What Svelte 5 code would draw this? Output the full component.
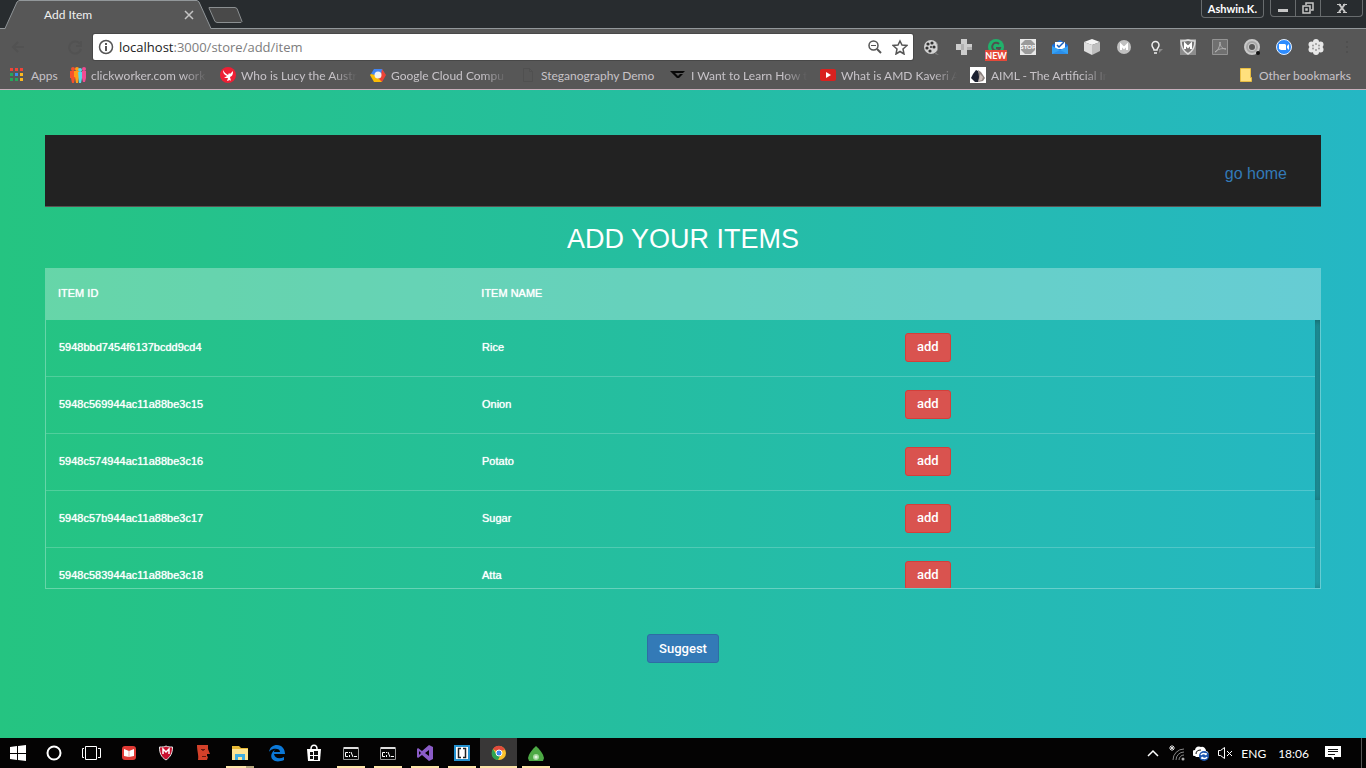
<script>
  const bookmarks = [
    { id: 'click', label: 'clickworker.com work' },
    { id: 'lucy', label: 'Who is Lucy the Austr' },
    { id: 'cloud', label: 'Google Cloud Compu' },
    { id: 'page', label: 'Steganography Demo', full: true },
    { id: 'learn', label: 'I Want to Learn How t' },
    { id: 'youtube', label: 'What is AMD Kaveri A' },
    { id: 'aiml', label: 'AIML - The Artificial In' }
  ];
  const extensions = ['reel', 'plus', 'gram', 'stop', 'inbox', 'cube', 'mega', 'bulb', 'shield', 'pdf', 'ring', 'zoom', 'flower', 'menu'];
  const items = [
    { id: '5948bbd7454f6137bcdd9cd4', name: 'Rice' },
    { id: '5948c569944ac11a88be3c15', name: 'Onion' },
    { id: '5948c574944ac11a88be3c16', name: 'Potato' },
    { id: '5948c57b944ac11a88be3c17', name: 'Sugar' },
    { id: '5948c583944ac11a88be3c18', name: 'Atta' }
  ];
  const apps = [
    { id: 'start' }, { id: 'cortana' }, { id: 'tasks' }, { id: 'reader' }, { id: 'mcafee' }, { id: 'face' },
    { id: 'files', run: 'double' }, { id: 'edge' }, { id: 'store' }, { id: 'cmd', run: 'on' }, { id: 'cmd', run: 'on' },
    { id: 'vs', run: 'on' }, { id: 'brackets', run: 'on' }, { id: 'chrome', active: true }, { id: 'mongo', run: 'on' }
  ];
</script>

{#snippet icon(id)}
  <svg class="icon" viewBox="0 0 16 16" width="16" height="16" aria-hidden="true">
    {#if id === 'apps'}
      <path fill="#f04438" d="M1 1h3v3H1zM6 1h3v3H6zM11 1h3v3h-3z" />
      <path fill="#26a65b" d="M1 6h3v3H1zM1 11h3v3H1zM6 11h3v3H6z" /><path fill="#3b8df0" d="M6 6h3v3H6z" />
      <path fill="#fbb921" d="M11 6h3v3h-3zM11 11h3v3h-3z" />
    {:else if id === 'click'}
      <circle cx="3" cy="2" r="2" fill="#f4512c" /><circle cx="7" cy="2" r="2" fill="#ff9e16" /><circle cx="10" cy="3" r="2" fill="#58d5e6" /><circle cx="14" cy="2" r="2" fill="#f04b93" />
      <path fill="#f4512c" d="M0 4h5v7l-1 5H2l-1-5H0z" /><path fill="#ff9e16" d="M4 4h5v6l-1 6H6l-1-6H4z" /><path fill="#58d5e6" d="M8 5h4v6l-1 5H9z" /><path fill="#f04b93" d="M12 4h4v7l-1 4h-2l-1-4z" />
    {:else if id === 'lucy'}
      <circle cx="8" cy="8" r="8" fill="#ee1f35" /><path fill="#fff" d="M3 3c0 3 1 5 4 6l-3 2h4l-1 3 3-1 1 1-1-4c3-1 3-4 3-6l-3 3-1-1-1 2C6 7 4 5 3 3z" />
    {:else if id === 'cloud'}
      <path fill="#4285f4" d="M4 2h8l3 5H9L5 9 1 7z" /><path fill="#ea4335" d="M12 2l4 6-4 7-4-2 3-5z" /><path fill="#fbbc05" d="M1 7l4 1 4 4 3 3H4L0 8z" /><circle cx="8" cy="8" r="3.500" fill="#f3f3f3" />
    {:else if id === 'page'}
      <path fill="none" stroke="#505050" d="M3.500 1.500h6l3 3v10h-9zM9.500 1.500v3h3" />
    {:else if id === 'learn'}
      <path fill="#080808" d="M0 4h15l-2 2H5l3 3 2-2h3l-4 4H7z" />
    {:else if id === 'youtube'}
      <rect y="2" width="16" height="12" rx="2" fill="#d9211f" /><path fill="#fff" d="M6 5l5 3-5 3z" />
    {:else if id === 'aiml'}
      <path fill="#fff" d="M0 0h16v16H0z" /><path fill="#1c2130" d="M6 3l2 1 2 5-2 6H5l-4-4 2-4z" /><path fill="#8c8380" d="M8 3l3 2 4 6-2 3-5 1 1-5z" /><path fill="#c9bdb8" d="M10 7l3 3-1 3-3 1z" />
    {:else if id === 'folder'}
      <path fill="#ffe07d" stroke="#e8bd42" d="M2.500 1.500h10v9h1v4h-11z" />
    {:else if id === 'reel'}
      <circle cx="7" cy="8" r="7" fill="#d2d2d2" /><path fill="#8a8a8a" d="M11 2c4 2 4 8 1 12l3 2-4-1c3-3 3-9 0-13z" />
      <g fill="#333"><circle cx="4" cy="5" r="1.600" /><circle cx="8" cy="4" r="1.600" /><circle cx="3" cy="9" r="1.600" /><circle cx="10" cy="8" r="1.600" /><circle cx="6" cy="12" r="1.600" /><circle cx="7" cy="8" r="1" /></g>
    {:else if id === 'plus'}
      <path fill="#ccc" d="M5 0h6v5h5v6h-5v5H5v-5H0V5h5z" /><path fill="#b0b0b0" d="M5 5h3v6H5zM11 8h5v3h-5z" />
    {:else if id === 'gram'}
      <circle cx="8" cy="8" r="8" fill="#20b26b" /><path fill="none" stroke="#505050" stroke-width="2" d="M11 5a4 4 0 1 0 1 4H8" />
    {:else if id === 'stop'}
      <path fill="#e8e8e8" d="M0 0h16v16H0z" /><path fill="#9a9a9a" d="M5 1h6l4 4v6l-4 4H5l-4-4V5z" /><text x="8" y="10" font-size="6" font-weight="700" text-anchor="middle" fill="#fff">STOP</text>
    {:else if id === 'inbox'}
      <path fill="#1b6fdc" d="M0 6l8-5 8 5v9H0z" /><path fill="#fff" d="M3 3h10v7H3z" /><path fill="#36a2f5" d="M0 7l8 4 8-4v8H0z" /><path fill="#2b8eea" d="M0 15l8-4 8 4z" /><path fill="none" stroke="#1a5fbc" stroke-width="1.500" d="M5 6l2 2 5-5" />
    {:else if id === 'cube'}
      <path fill="#f4f4f4" d="M8 0l8 3-8 3-8-3z" /><path fill="#ddd" d="M0 3l8 3v10l-8-4z" /><path fill="#bebebe" d="M16 3L8 6v10l8-4z" />
    {:else if id === 'mega'}
      <circle cx="8" cy="8" r="7" fill="#c0c0c0" /><path fill="none" stroke="#fff" stroke-width="2" d="M5 11V6l3 3 3-3v5" />
    {:else if id === 'bulb'}
      <path fill="none" stroke="#eee" stroke-width="1.500" d="M6 11c0-2-2-2-2-5a3.500 3.500 0 0 1 7 0c0 3-2 3-2 5zM6 14h3" /><path fill="#888" d="M11 10h4l-4 4z" />
    {:else if id === 'shield'}
      <path fill="#8c8c8c" d="M0 0h16v16H0z" /><path fill="#777" stroke="#ddd" stroke-width="1.500" d="M1 2c3 0 5 0 7-1 2 1 4 1 7 1 0 6-2 10-7 13C3 12 1 8 1 2z" /><path fill="none" stroke="#fff" stroke-width="2" d="M5 10V5l3 3 3-3v5" />
    {:else if id === 'pdf'}
      <path fill="#707070" stroke="#949494" d="M.5.5h15v15H.5z" /><path fill="none" stroke="#b0b0b0" d="M3 13c3-1 5-6 5-10 0 5 3 7 6 7-4-1-8 0-11 3z" />
    {:else if id === 'ring'}
      <circle cx="8" cy="8" r="5.500" fill="none" stroke="#c9c9c9" stroke-width="5" /><circle cx="8" cy="8" r="5" fill="none" stroke="#a6a6a6" stroke-width="2" /><circle cx="14" cy="14" r="2" fill="#111" />
    {:else if id === 'zoom'}
      <circle cx="8" cy="8" r="7.500" fill="#2d8cff" stroke="#e6f1ff" /><path fill="#fff" d="M3 5h6l1 1v5H5l-2-1zM11 7l2-2v6l-2-2z" />
    {:else if id === 'flower'}
      <g fill="#e8e8e8"><circle cx="8" cy="8" r="4" /><circle cx="8" cy="3" r="3" /><circle cx="12.500" cy="5.500" r="3" /><circle cx="12.500" cy="10.500" r="3" /><circle cx="8" cy="13" r="3" /><circle cx="3.500" cy="10.500" r="3" /><circle cx="3.500" cy="5.500" r="3" /></g><g fill="#999"><circle cx="8" cy="5" r="1" /><circle cx="8" cy="11" r="1" /><circle cx="5" cy="6.500" r="1" /><circle cx="11" cy="6.500" r="1" /><circle cx="5" cy="9.500" r="1" /><circle cx="11" cy="9.500" r="1" /></g>
    {:else if id === 'menu'}
      <path fill="#4f4f4f" d="M7 2h2v2H7zM7 7h2v2H7zM7 12h2v2H7z" />
    {/if}
  </svg>
{/snippet}

{#snippet appIcon(id)}
  <svg class="icon" viewBox="0 0 20 20" width="20" height="20" aria-hidden="true">
    {#if id === 'start'}
      <path fill="#fff" d="M2 4l7-1v7H2zM10 3l8-1v8h-8zM2 11h7v6l-7-1zM10 11h8v7l-8-1z" />
    {:else if id === 'cortana'}
      <circle cx="9" cy="10" r="6.500" fill="none" stroke="#fff" stroke-width="2" />
    {:else if id === 'tasks'}
      <path fill="none" stroke="#fff" d="M3.500 3.500h11v13h-11zM2 5.500H.5v9H2M16 5.500h2.500v9H16" />
    {:else if id === 'reader'}
      <rect x="3" y="3" width="14" height="14" rx="3" fill="#e03a35" /><path fill="#fff" d="M5 6l5 2 5-2v7l-5 1-5-1z" /><path stroke="#f1a3a0" d="M10 8v6" />
    {:else if id === 'mcafee'}
      <path fill="#c8102e" stroke="#e8e8e8" d="M3.500 4c3 0 5 0 6.500-1 2 1 4 1 6.500 1 0 6-2 10-6.500 13C5 14 3.500 10 3.500 4z" /><path fill="none" stroke="#fff" stroke-width="1.500" d="M7 11V6l3 3 3-3v5" />
    {:else if id === 'face'}
      <path fill="#d4412a" d="M4 2h11v4l2 5h-3v2l1 1-1 3H5c1-5-1-8-1-15z" /><path stroke="#631910" d="M8 6.500h4M9 13.500h4" /><circle cx="10" cy="7" r="1" fill="#631910" />
    {:else if id === 'files'}
      <path fill="#e8b935" d="M2 3h7l2 2h7v4H2z" /><path fill="#ffe493" d="M2 6h16v11H2z" /><path fill="#41ade0" d="M5 11h10v6h-3v-3H8v3H5z" />
    {:else if id === 'edge'}
      <path fill="#0b78d7" d="M2 9c1-5 4-7 8-7 5 0 8 4 8 9H7c1 5 6 5 10 3v3C8 21 2 16 5 10c1-2 3-4 5-4-5-1-7 2-8 3zm5 0h6c0-4-6-4-6 0z" />
    {:else if id === 'store'}
      <path fill="#fff" d="M3 6h14l-1 12H4z" /><path fill="none" stroke="#fff" stroke-width="1.500" d="M7 6c0-5 6-5 6 0" /><path fill="#111" d="M6 9h3v3H6zM10 8h4v4h-4zM6 13h3v3H6zM10 13h4v4h-4z" />
    {:else if id === 'cmd'}
      <path fill="#060606" stroke="#999" d="M2.500 4.500h15v12h-15z" /><path stroke="#ddd" stroke-width="2" d="M3 5h14" /><path fill="none" stroke="#fff" d="M7 9.500H4.500v4H7M8.500 9v1M8.500 12v2M10 9l2 5M13 13.500h3" />
    {:else if id === 'vs'}
      <path fill="#8b5cc7" fill-rule="evenodd" d="M14 2l4 2v12l-4 2-7-6-4 3-1-1V6l1-1 4 3zM4 8v4l2-2zm10-1l-4 3 4 3z" />
    {:else if id === 'brackets'}
      <rect x="2" y="2" width="16" height="16" fill="#2492d0" /><path fill="#fff" d="M4 4h12v12H4z" /><path fill="none" stroke="#222" stroke-width="1.500" d="M9 5.500H6.500v9H9M11 5.500h2.500v9H11" />
    {:else if id === 'chrome'}
      <circle cx="10" cy="10" r="7" fill="#fbc22d" /><path fill="#e14b3c" d="M10 10L4 6c3-5 10-4 12 1l-6 1z" /><path fill="#2fa253" d="M4 6l4 6 3 1-2 4C3 17 1 10 4 6z" /><circle cx="10" cy="10" r="3" fill="#4285f4" stroke="#fff" />
    {:else if id === 'mongo'}
      <path fill="#4da945" d="M10 3c4 4 7 7 8 12l-1 3H3l-1-3c1-5 4-8 8-12z" /><circle cx="10" cy="14" r="3" fill="#a6d9a0" /><circle cx="10" cy="14" r="1.500" fill="#e4f5e2" />
    {/if}
  </svg>
{/snippet}

<div class="desktop">
  <header class="browser">
    <div class="tabstrip">
      <div class="tab">
        <svg class="tab-shape" viewBox="0 0 212 29" width="212" height="29" aria-hidden="true">
          <path fill="#575757" d="M5 29L17 2l2-1h178l2 1 12 27z" /><path fill="none" stroke="#92979a" d="M0 28.500h5L17 2l2-1.500h178l2 1.500 12 26.500h1" />
        </svg>
        <span class="tab-title">Add Item</span>
        <button class="tab-close" aria-label="Close tab"><svg viewBox="0 0 10 10" width="10" height="10"><path stroke="#c4c4c4" stroke-width="1.500" d="M1 1l8 8M9 1L1 9" /></svg></button>
      </div>
      <button class="newtab" aria-label="New tab"><svg viewBox="0 0 36 20" width="36" height="20"><path fill="#494949" stroke="#8b8f91" d="M1 2.500h26l2 1 5 13-1 1H9l-2-1L1 3z" /></svg></button>
      <div class="window-tools">
        <button class="profile">Ashwin.K.</button>
        <div class="controls">
          <button aria-label="Minimize"><svg viewBox="0 0 12 12" width="12" height="12"><path fill="#c6c6c6" d="M1 7h10v3H1z" /></svg></button>
          <button aria-label="Restore"><svg viewBox="0 0 12 12" width="12" height="12"><path fill="none" stroke="#c6c6c6" stroke-width="1.500" d="M4 3V1h7v7H9M1 4h7v7H1zM4 7h1v1H4z" /></svg></button>
          <button class="close" aria-label="Close"><svg viewBox="0 0 12 12" width="12" height="12"><path stroke="#c6c6c6" stroke-width="2" d="M3 2l6 8M9 2l-6 8" /><path stroke="#c6c6c6" d="M1 2.500h4M7 2.500h4M1 10.500h4M7 10.500h4" /></svg></button>
        </div>
      </div>
    </div>

    <div class="toolbar">
      <div class="nav">
        <button aria-label="Back"><svg viewBox="0 0 16 16" width="16" height="16"><path fill="none" stroke="#525252" stroke-width="2" d="M14 8H3M8 3L3 8l5 5" /></svg></button>
        <button aria-label="Reload"><svg viewBox="0 0 16 16" width="16" height="16"><path fill="none" stroke="#525252" stroke-width="2" d="M13 5a6 6 0 1 0 1 5M14 2v5H9" /></svg></button>
      </div>
      <div class="address">
        <svg class="icon" viewBox="0 0 16 16" width="16" height="16"><circle cx="8" cy="8" r="6.500" fill="none" stroke="#555" stroke-width="1.500" /><path fill="#555" d="M7 4h2v2H7zM7 7h2v5H7z" /></svg>
        <a class="url" href="#top">localhost<span>:3000/store/add/item</span></a>
        <button aria-label="Zoom"><svg viewBox="0 0 16 16" width="16" height="16"><circle cx="6.500" cy="6.500" r="4.500" fill="none" stroke="#555" stroke-width="1.500" /><path stroke="#555" stroke-width="2" d="M10 10l4 4" /><path stroke="#555" d="M4 6.500h5" /></svg></button>
        <button aria-label="Bookmark this page"><svg viewBox="0 0 16 16" width="16" height="16"><path fill="none" stroke="#555" stroke-width="1.500" d="M8 2l2 4 5 .5-4 3.500 1 5-4-2.500L4 15l1-5-4-3.500L6 6z" /></svg></button>
      </div>
      <div class="extensions">
        {#each extensions as ext}
          <button aria-label={ext}>{@render icon(ext)}{#if ext === 'gram'}<span class="new">NEW</span>{/if}</button>
        {/each}
      </div>
    </div>

    <nav class="bookmarks">
      <a class="apps" href="#apps">{@render icon('apps')}<span>Apps</span></a>
      {#each bookmarks as mark}
        <a class="mark" href="#{mark.id}">{@render icon(mark.id)}<span class:fade={!mark.full}>{mark.label}</span></a>
      {/each}
      <a class="other" href="#other">{@render icon('folder')}<span>Other bookmarks</span></a>
    </nav>
  </header>

  <main id="top">
    <div class="navbar"><a href="#home">go home</a></div>
    <h1>ADD YOUR ITEMS</h1>
    <div class="table-head">
      <table>
        <thead><tr><th>ITEM ID</th><th>ITEM NAME</th><th aria-label="Action"></th></tr></thead>
      </table>
    </div>
    <div class="table-body">
      <div class="scroller">
        <table>
          <tbody>
            {#each items as item}
              <tr><td>{item.id}</td><td>{item.name}</td><td><button class="btn danger">add</button></td></tr>
            {/each}
          </tbody>
        </table>
      </div>
      <div class="track"><div class="thumb"></div></div>
    </div>
    <button class="btn primary">Suggest</button>
  </main>

  <footer class="taskbar">
    <div class="apps-row">
      {#each apps as app}
        <button class="app {app.run ?? ''}" class:active={app.active} aria-label={app.id}>{@render appIcon(app.id)}</button>
      {/each}
    </div>
    <div class="tray">
      <svg viewBox="0 0 16 16" width="16" height="16"><path fill="none" stroke="#fff" stroke-width="1.500" d="M3 11l5-5 5 5" /></svg>
      <svg viewBox="0 0 16 16" width="16" height="16"><path stroke="#ddd" d="M3 0v6M0 3h6M1 1l4 4M5 1L1 5" /><path fill="none" stroke="#888" d="M4 15A11 11 0 0 1 15 4M7 15a8 8 0 0 1 8-8M10 15a5 5 0 0 1 5-5" /><circle cx="14" cy="14" r="1.500" fill="#aaa" /></svg>
      <svg viewBox="0 0 16 16" width="16" height="16"><path fill="#fff" d="M2 11a3 3 0 0 1 0-6 4 4 0 0 1 6-3 4 4 0 0 1 5 4c2 0 3 2 2 4l-3 2H3z" /><path fill="none" stroke="#111" d="M3 9c0-3 2-4 5-4" /><circle cx="11" cy="11" r="5" fill="#1d56ae" /><path fill="none" stroke="#fff" stroke-width="1.500" d="M8 10c1-2 4-2 5 0V8M14 12c-1 2-4 2-5 0v2" /></svg>
      <svg viewBox="0 0 16 16" width="16" height="16"><path fill="none" stroke="#fff" d="M1.500 5.500h2l4-3v11l-4-3h-2zM10 6l5 5M15 6l-5 5" /></svg>
      <span>ENG</span>
      <time>18:06</time>
      <svg class="note" viewBox="0 0 16 16" width="16" height="16"><path fill="#fff" d="M0 1h16v11H9v3l-3-3H0z" /><path stroke="#111" d="M3 4.500h10M3 6.500h10M3 9.500h7" /></svg>
    </div>
  </footer>
</div>

<style>
  :global(body) { margin: 0; }
  * { box-sizing: border-box; }
  button { border: 0; padding: 0; background: none; font: inherit; color: inherit; }
  a { text-decoration: none; color: inherit; }
  svg { display: block; flex: none; }
  .desktop { min-height: 100vh; display: flex; flex-direction: column; font-family: Lato, "Open Sans", sans-serif; font-size: 12px; }
  .browser { background: #575757; border-bottom: 1px solid #c8afbb; color: #c7c3c8; }

  .tabstrip { height: 29px; display: flex; background: #282c2f; box-shadow: inset 0 -1px #92979a; }
  .tab { position: relative; width: 208px; display: flex; align-items: center; padding: 0 14px 0 44px; color: #f0f0f0; }
  .tab-shape { position: absolute; left: 0; top: 0; }
  .tab-title { position: relative; flex: 1; }
  .tab-close { position: relative; }
  .newtab { align-self: center; }
  .window-tools { margin-left: auto; display: flex; align-items: flex-start; gap: 6px; }
  .profile { height: 18px; padding: 0 6px; border: 1px solid #686c6e; border-top: 0; border-radius: 0 0 4px 4px; color: #fff; font-size: 11px; font-weight: 700; }
  .controls { display: flex; height: 17px; border: 1px solid #686c6e; border-top: 0; border-radius: 0 0 4px 4px; margin-right: 3px; }
  .controls button { width: 25px; display: grid; place-items: center; border-right: 1px solid #686c6e; }
  .controls .close { width: 41px; border: 0; }

  .toolbar { display: flex; align-items: center; height: 36px; }
  .nav { width: 93px; padding: 0 10px; display: flex; justify-content: space-between; }
  .address { flex: 1; min-width: 0; height: 26px; display: flex; align-items: center; padding: 0 5px; background: #fff; border-radius: 2px; box-shadow: 0 0 0 1px #484848; }
  .url { flex: 1; margin-left: 5px; font-family: "Open Sans", sans-serif; font-size: 13px; color: #222; white-space: nowrap; overflow: hidden; }
  .url span { color: #7d7d7d; }
  .address button + button { margin-left: 9px; }
  .extensions { display: flex; padding: 0 4px 0 3px; }
  .extensions button { position: relative; width: 32px; height: 26px; display: grid; place-items: center; }
  .extensions button:last-child { width: 30px; }
  .new { position: absolute; left: 5px; top: 16px; width: 22px; background: #e5493a; color: #fff; font-size: 9px; line-height: 11px; font-weight: 700; text-align: center; }

  .bookmarks { height: 24px; display: flex; align-items: center; padding: 0 15px 4px 9px; white-space: nowrap; }
  .bookmarks a { display: flex; align-items: center; gap: 5px; }
  .bookmarks .apps { width: 61px; flex: none; gap: 6px; }
  .mark { width: 150px; padding-right: 8px; overflow: hidden; }
  .mark span { flex: 1; overflow: hidden; }
  .fade { mask-image: linear-gradient(to right, #000 76%, transparent 96%); }
  .bookmarks .other { margin-left: auto; }

  main { flex: 1; display: flex; flex-direction: column; padding: 45px; background: linear-gradient(to right, #25c481, #25b7c4); color: #fff; font-family: "Liberation Sans", Arial, sans-serif; }
  .navbar { height: 72px; display: flex; align-items: center; justify-content: flex-end; padding: 6px 34px 0 0; background: #222; border-bottom: 1px solid #5b5252; }
  .navbar a { color: #337ab7; font-size: 16px; }
  h1 { margin: 17px 0 14px; font-size: 27px; line-height: 30px; font-weight: 400; text-align: center; }
  table { width: 100%; table-layout: fixed; border-collapse: separate; border-spacing: 0; }
  .table-head { padding-right: 6px; background: rgba(255, 255, 255, 0.3); }
  th { height: 52px; padding: 0 13px 2px; text-align: left; font-size: 11px; font-weight: 400; text-shadow: 0 0 1px #fff; }
  .table-body { height: 269px; display: flex; border: 1px solid rgba(255, 255, 255, 0.3); border-top: 0; }
  .scroller { flex: 1; overflow-y: auto; scrollbar-width: none; }
  td { height: 57px; padding: 0 13px 2px; border-bottom: 1px solid rgba(255, 255, 255, 0.2); font-size: 11px; text-shadow: 0 0 1px #fff; }
  .track { width: 5px; box-shadow: inset 0 0 6px rgba(0, 0, 0, 0.3); }
  .thumb { height: 67%; box-shadow: inset 0 0 6px rgba(0, 0, 0, 0.3); }
  .btn { display: inline-block; height: 29px; padding: 0 11px; border: 1px solid; border-radius: 3px; color: #fff; font-family: Roboto, "Liberation Sans", sans-serif; font-size: 13px; font-weight: 500; line-height: 26px; vertical-align: middle; text-shadow: none; }
  .danger { background: #d9534f; border-color: #d43f3a; }
  .primary { align-self: center; margin-top: 45px; background: #337ab7; border-color: #2e6da4; }

  .taskbar { height: 30px; display: flex; justify-content: space-between; background: #040303; color: #fff; }
  .apps-row { display: flex; }
  .app { width: 37px; display: grid; place-items: center; }
  .app:first-child { width: 36px; }
  .app.on { background: linear-gradient(#fce4a8, #fce4a8) center bottom / 28px 2px no-repeat; }
  .app.double { background: linear-gradient(to right, #fce4a8 70%, #b5a67c 70%) center bottom / 28px 2px no-repeat; }
  .app.active { background: linear-gradient(#fce4a8, #fce4a8) center bottom / 100% 2px no-repeat #393737; }
  .tray { display: flex; align-items: center; gap: 8px; margin-right: 4px; padding-right: 20px; border-right: 1px solid #555; }
  .tray time { margin-left: 4px; }
  .note { margin-left: 8px; }
</style>
